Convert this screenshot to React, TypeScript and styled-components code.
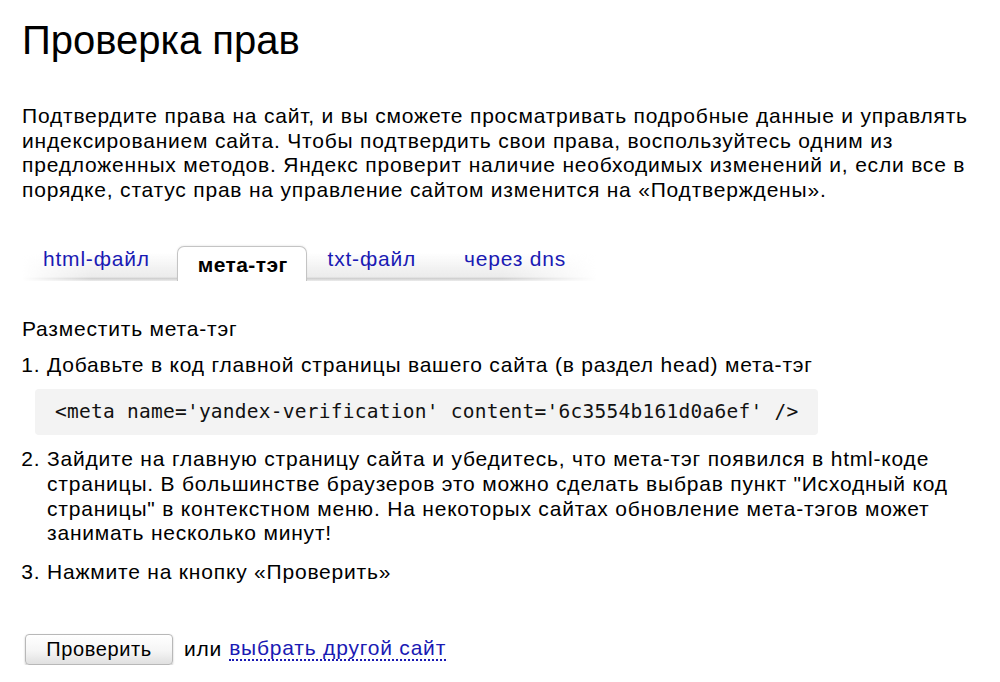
import React from 'react';
import styled, { createGlobalStyle } from 'styled-components';

const GlobalStyle = createGlobalStyle`
  html, body {
    margin: 0;
    padding: 0;
    background: #fff;
  }
  body {
    font-family: "Liberation Sans", Arial, sans-serif;
    color: #000;
  }
`;

const Page = styled.div`
  padding: 12px 22px 0 22px;
  width: 1000px;
  box-sizing: border-box;
`;

const Title = styled.h1`
  margin: 0;
  font-weight: normal;
  font-size: 40px;
  line-height: 56px;
`;

const Text = styled.div`
  font-size: 21px;
  letter-spacing: 0.8px;
  line-height: 24.7px;
`;

const Intro = styled(Text)`
  margin-top: 36px;
`;

const TabStrip = styled.div`
  margin-top: 37px;
  display: flex;
  align-items: flex-end;
  width: 574px;
  height: 39px;
  position: relative;

  &::before {
    content: '';
    position: absolute;
    left: 0;
    right: 0;
    top: 0;
    bottom: -2px;
    background: linear-gradient(to bottom, rgba(255, 255, 255, 0) 30%, #ebebeb 90%, #d0d0d0 94%, #ececec 100%);
    -webkit-mask-image: linear-gradient(to right, transparent 0, #000 70px, #000 480px, transparent 575px);
    mask-image: linear-gradient(to right, transparent 0, #000 70px, #000 480px, transparent 575px);
  }
`;

const Tab = styled.a<{ $active?: boolean; $pad?: string }>`
  position: relative;
  flex-shrink: 0;
  white-space: nowrap;
  display: block;
  height: ${(p) => (p.$active ? '35px' : '36px')};
  box-sizing: border-box;
  padding: ${(p) => p.$pad || '0 20px'};
  font-size: 21px;
  letter-spacing: ${(p) => (p.$active ? '0.4px' : '0.8px')};
  line-height: ${(p) => (p.$active ? '35px' : '36px')};
  color: ${(p) => (p.$active ? '#000' : '#1a1ab4')};
  font-weight: ${(p) => (p.$active ? 'bold' : 'normal')};
  background: ${(p) => (p.$active ? '#fff' : 'transparent')};
  border: ${(p) => (p.$active ? '1px solid #c4c4c4' : '1px solid transparent')};
  border-bottom: none;
  border-radius: 7px 7px 0 0;
  cursor: pointer;
  align-self: ${(p) => (p.$active ? 'flex-end' : 'flex-start')};
  margin-bottom: ${(p) => (p.$active ? '-2px' : '0')};
  box-shadow: ${(p) => (p.$active ? '0 -1px 2px rgba(0,0,0,0.06)' : 'none')};
`;

const SubTitle = styled(Text)`
  margin-top: 38px;
`;

const Steps = styled.ol`
  margin: 11px 0 0;
  padding: 0 0 0 25px;
  font-size: 21px;
  letter-spacing: 0.8px;
  line-height: 24.7px;
`;

const Step = styled.li`
  padding-left: 0;
  margin-bottom: 14px;
`;

const Code = styled.pre`
  margin: 12px 0 -2px -12px;
  width: 783px;
  box-sizing: border-box;
  padding: 11px 20px;
  background: #f3f3f3;
  border-radius: 4px;
  font-family: "DejaVu Sans Mono", "Liberation Mono", monospace;
  font-size: 19.5px;
  letter-spacing: 0.25px;
  line-height: 24px;
  color: #111;
`;

const Actions = styled.div`
  margin-top: 49px;
  display: flex;
  align-items: center;
  font-size: 21px;
  letter-spacing: 0.8px;
  padding-left: 3px;
`;

const Button = styled.button`
  width: 148px;
  height: 31px;
  padding: 0;
  font-family: "Liberation Sans", Arial, sans-serif;
  font-size: 20px;
  letter-spacing: 0.6px;
  color: #000;
  background: linear-gradient(to bottom, #ffffff 0%, #f5f5f5 55%, #e0e0e0 100%);
  border: 1px solid #b8b8b8;
  border-radius: 4px;
  box-shadow: 0 1px 2px rgba(0, 0, 0, 0.25);
  margin-right: 11px;
`;

const Link = styled.a`
  margin-left: 7px;
  color: #1a1ab4;
  text-decoration: none;
  border-bottom: 2px dotted #1a1ab4;
  line-height: 22px;
`;

export default function App() {
  return (
    <>
      <GlobalStyle />
      <Page>
        <Title>Проверка прав</Title>
        <Intro>
          Подтвердите права на сайт, и вы сможете просматривать подробные данные и управлять
          индексированием сайта. Чтобы подтвердить свои права, воспользуйтесь одним из
          предложенных методов. Яндекс проверит наличие необходимых изменений и, если все в
          порядке, статус прав на управление сайтом изменится на «Подтверждены».
        </Intro>
        <TabStrip>
          <Tab $pad="0 26px 0 20px">html-файл</Tab>
          <Tab $active $pad="0 18px 0 20px">мета-тэг</Tab>
          <Tab $pad="0 46px 0 20px">txt-файл</Tab>
          <Tab $pad="0">через dns</Tab>
        </TabStrip>
        <SubTitle>Разместить мета-тэг</SubTitle>
        <Steps>
          <Step>
            Добавьте в код главной страницы вашего сайта (в раздел head) мета-тэг
            <Code>{"<meta name='yandex-verification' content='6c3554b161d0a6ef' />"}</Code>
          </Step>
          <Step>
            Зайдите на главную страницу сайта и убедитесь, что мета-тэг появился в html-коде
            страницы. В большинстве браузеров это можно сделать выбрав пункт "Исходный код
            страницы" в контекстном меню. На некоторых сайтах обновление мета-тэгов может
            занимать несколько минут!
          </Step>
          <Step>Нажмите на кнопку «Проверить»</Step>
        </Steps>
        <Actions>
          <Button>Проверить</Button>
          или
          <Link>выбрать другой сайт</Link>
        </Actions>
      </Page>
    </>
  );
}
